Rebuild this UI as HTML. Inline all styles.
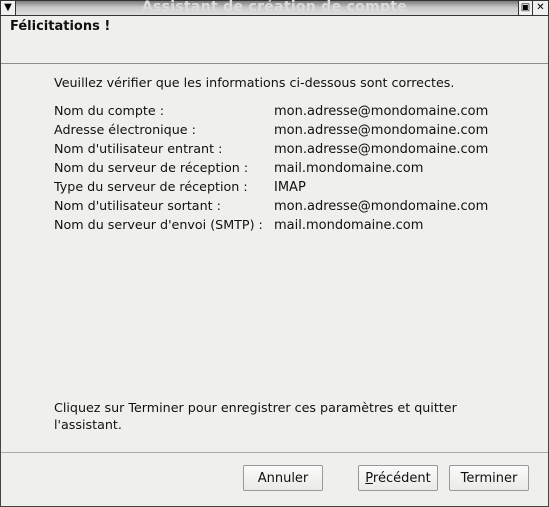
<!DOCTYPE html>
<html><head><meta charset="utf-8"><style>
*{margin:0;padding:0;box-sizing:border-box}
body{width:549px;height:507px;background:#efefec;font-family:"DejaVu Sans","Liberation Sans",sans-serif;font-size:12.7px;color:#111;position:relative;overflow:hidden}
.frame{position:absolute;left:0;top:0;width:549px;height:507px;border:1px solid #444;border-top:none}
.tb{position:absolute;left:0;top:0;width:549px;height:16px;background:linear-gradient(#7a7a7a,#c8c8c8 45%,#e0e0e0);border:1px solid #333}
.tb .t{position:absolute;left:0;right:0;top:-2px;text-align:center;font-size:14px;font-weight:bold;color:#dcdcdc;letter-spacing:0.3px}
.bx{position:absolute;top:0;height:14px;width:15px;background:#f0f0f0;border-right:1px solid #333;font-size:10px;font-weight:bold;text-align:center;line-height:14px;color:#000}
.a{position:absolute;white-space:nowrap}
.sep{position:absolute;left:1px;width:547px;height:1px;background:#8e8e8e}
.btn{position:absolute;top:465px;width:80px;height:26px;border:1px solid #999;border-radius:2px;background:linear-gradient(#fafafa,#eaeae8);text-align:center;line-height:25px;font-size:13px}
</style></head><body>
<div class="frame"></div>
<div class="tb"><div class="t">Assistant de création de compte</div>
<div class="bx" style="left:0">&#9660;</div>
<div class="bx" style="left:517px;border-left:1px solid #333;width:15px">&#9635;</div>
<div class="bx" style="left:532px;width:15px;border-right:none">&#10005;</div></div>
<div class="a" style="left:10px;top:19px;font-weight:bold;font-size:13px">Félicitations !</div>
<div class="sep" style="top:63px"></div>
<div class="a" style="left:54px;top:75px">Veuillez vérifier que les informations ci-dessous sont correctes.</div>
<div class="a" style="left:54px;top:101px;line-height:19px">Nom du compte :<br>Adresse électronique :<br>Nom d'utilisateur entrant :<br>Nom du serveur de réception :<br>Type du serveur de réception :<br>Nom d'utilisateur sortant :<br>Nom du serveur d'envoi (SMTP) :</div>
<div class="a" style="left:274px;top:102px;line-height:19px;font-size:13px">mon.adresse@mondomaine.com<br>mon.adresse@mondomaine.com<br>mon.adresse@mondomaine.com<br>mail.mondomaine.com<br>IMAP<br>mon.adresse@mondomaine.com<br>mail.mondomaine.com</div>
<div class="a" style="left:54px;top:399px;line-height:17px">Cliquez sur Terminer pour enregistrer ces paramètres et quitter<br>l'assistant.</div>
<div class="sep" style="top:452px;background:#aaa"></div>
<div class="btn" style="left:243px">Annuler</div>
<div class="btn" style="left:358px"><u>P</u>récédent</div>
<div class="btn" style="left:449px">Terminer</div>
</body></html>
